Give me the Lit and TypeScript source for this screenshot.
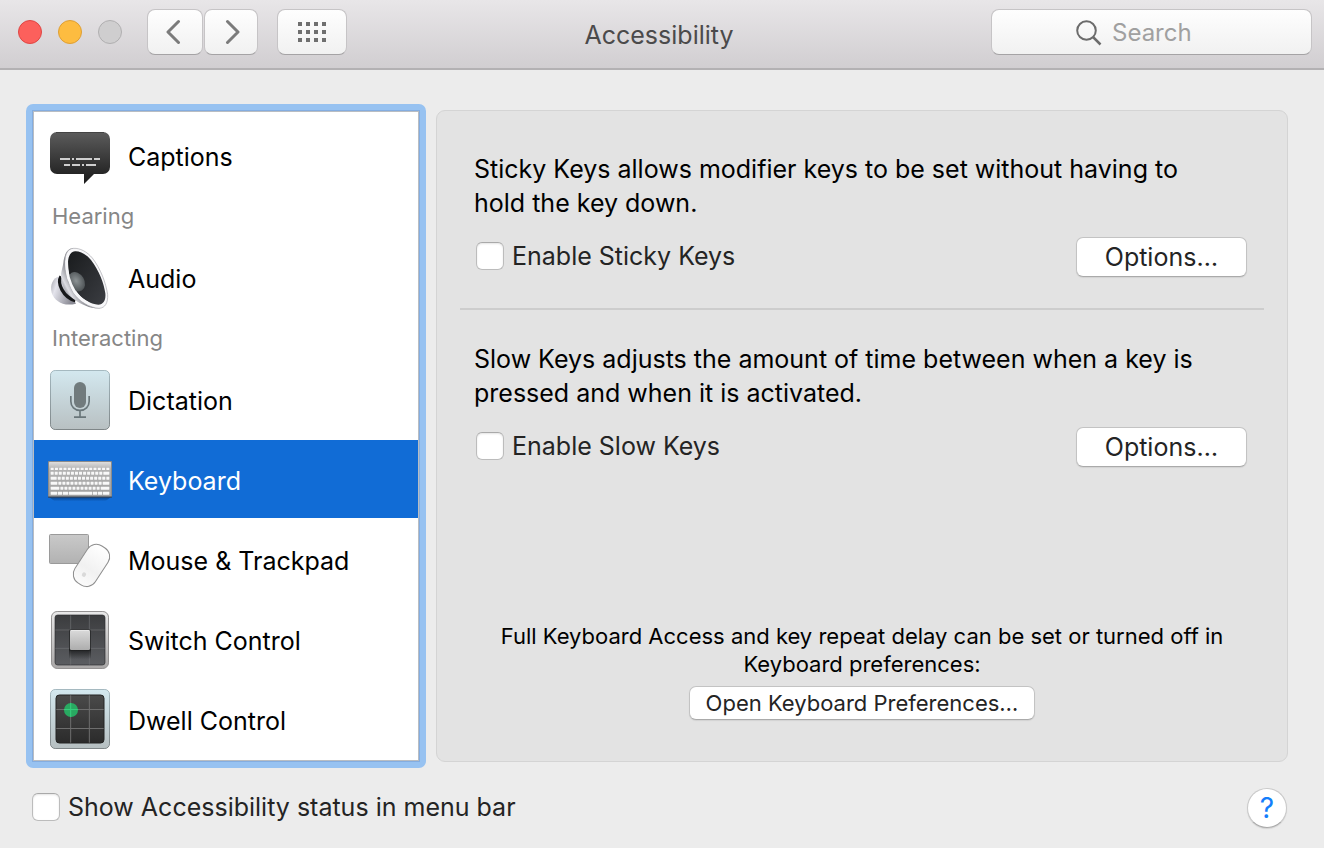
import { LitElement, html, svg, css } from "lit";
import type { TemplateResult } from "lit";
import { customElement, state } from "lit/decorators.js";
import { classMap } from "lit/directives/class-map.js";

const captionsIcon = html`
  <svg viewBox="0 0 64 64" aria-hidden="true">
    <defs>
      <linearGradient id="cap" x1="0" y1="9" x2="0" y2="61" gradientUnits="userSpaceOnUse">
        <stop offset="0" stop-color="#5c5c5c" />
        <stop offset="0.8" stop-color="#262626" />
        <stop offset="1" stop-color="#1c1c1c" />
      </linearGradient>
    </defs>
    <path fill="url(#cap)" d="M9 9H55a7 7 0 0 1 7 7V44a7 7 0 0 1-7 7H46L36 61V51H9a7 7 0 0 1-7-7V16a7 7 0 0 1 7-7Z" />
    <path d="M8 9.500H56" stroke="#444" />
    <path stroke="#cfcfcf" stroke-width="2" d="M12 36h10M24 36h2M28 36h16M46 36h6M16 42h6M24 42h8M34 42h2M38 42h10" />
  </svg>
`;

const audioIcon = html`
  <svg viewBox="84 447 192 192" aria-hidden="true">
    <defs>
      <linearGradient id="magnet" x1="0" y1="0" x2="1" y2="0.4">
        <stop offset="0" stop-color="#a2a2aa" />
        <stop offset="0.3" stop-color="#e4e4ec" />
        <stop offset="1" stop-color="#8a8a94" />
      </linearGradient>
      <linearGradient id="cone" x1="122" y1="570" x2="160" y2="550" gradientUnits="userSpaceOnUse">
        <stop offset="0" stop-color="#8a8b91" />
        <stop offset="0.35" stop-color="#dcdce2" />
        <stop offset="1" stop-color="#88898f" />
      </linearGradient>
      <linearGradient id="membrane" x1="0" y1="0" x2="1" y2="1">
        <stop offset="0" stop-color="#191b1d" />
        <stop offset="1" stop-color="#3b3d42" />
      </linearGradient>
      <radialGradient id="dust" cx="0.45" cy="0.5" r="0.6">
        <stop offset="0" stop-color="#8d9395" />
        <stop offset="1" stop-color="#484d50" />
      </radialGradient>
    </defs>
    <path fill="url(#magnet)" d="M120 541C98 545 89 568 95 590C102 613 128 633 168 623Z" />
    <path fill="none" stroke="#17181a" stroke-width="10" d="M123 541C110 562 130 604 166 614" />
    <path fill="url(#cone)" d="M160 457C140 457 133 478 130 500C127 520 122 530 123 543C126 570 142 598 165 612C185 626 210 638 240 637Z" />
    <path
      fill="#f7f7f9"
      stroke="#a7a7ad"
      stroke-width="2"
      d="M161 457C143 458 136 474 135 494C134 530 143 562 160 590C178 617 211 636 237 637C256 636 264 620 263 596C258 562 242 518 217 486C201 467 180 456 161 457Z"
    />
    <path
      fill="url(#membrane)"
      d="M165 466C150 468 145 482 144 498C143 528 151 558 168 584C183 607 212 625 235 626C251 625 258 612 256 592C252 562 237 523 213 492C199 475 180 465 165 466Z"
    />
    <ellipse cx="170" cy="557" rx="31" ry="23" transform="rotate(60 170 557)" fill="url(#dust)" />
    <path fill="none" stroke="#f7f7f9" stroke-width="8" d="M140 494C139 529 147 560 164 587C174 602 190 615 207 623" />
  </svg>
`;

const dictationIcon = html`
  <svg viewBox="84 81 192 192" aria-hidden="true">
    <defs>
      <linearGradient id="tile" x1="0" y1="0" x2="0" y2="1">
        <stop offset="0" stop-color="#d3e8ef" />
        <stop offset="1" stop-color="#b8c0c2" />
      </linearGradient>
      <linearGradient id="tileEdge" x1="0" y1="0" x2="0" y2="1">
        <stop offset="0" stop-color="#a5b9c0" />
        <stop offset="1" stop-color="#7f8688" />
      </linearGradient>
    </defs>
    <rect x="91.500" y="91.500" width="177" height="177" rx="14" fill="url(#tile)" stroke="url(#tileEdge)" stroke-width="3" />
    <rect x="162" y="126" width="36" height="78" rx="18" fill="#717b7d" />
    <path fill="none" stroke="#69767a" stroke-width="5" d="M152.500 168V184C152.500 200 164 211 180 211C196 211 207.500 200 207.500 184V168M180 211V231M162 231.500H198" />
  </svg>
`;

const keyRows: number[][] = [
  [383, 7, 9, 9, 9, 9, 9, 9, 9, 9, 9, 9, 9, 9, 9, 9],
  [395, 9, 9, 9, 9, 9, 9, 9, 9, 9, 9, 9, 9, 9, 9, 18],
  [410, 9, 18, 9, 9, 9, 9, 9, 9, 9, 9, 9, 9, 9, 9, 9],
  [425, 9, 20, 9, 9, 9, 9, 9, 9, 9, 9, 9, 9, 9, 20],
  [440, 9, 26, 9, 9, 9, 9, 9, 9, 9, 9, 9, 9, 26],
  [455, 9, 19, 13, 16, 70, 13, 13, 19],
];

const keys = keyRows.map(([y, height, ...widths]) => {
  const free = 176 - widths.reduce((sum, width) => sum + width, 0);
  const gap = free / (widths.length - 1);
  let x = 92;
  return widths.map((width) => {
    const key = svg`<rect x=${x} y=${y} width=${width} height=${height} rx="1" fill="#f8f8f8" />`;
    x += width + gap;
    return key;
  });
});

const keyboardIcon = html`
  <svg viewBox="84 321 192 192" aria-hidden="true">
    <defs>
      <linearGradient id="alu" x1="0" y1="0" x2="0" y2="1">
        <stop offset="0" stop-color="#dedede" />
        <stop offset="0.2" stop-color="#b4b4b4" />
        <stop offset="1" stop-color="#9f9f9f" />
      </linearGradient>
      <linearGradient id="kshade" x1="0" y1="0" x2="0" y2="1">
        <stop offset="0" stop-color="#06336e" stop-opacity="0.8" />
        <stop offset="1" stop-color="#06336e" stop-opacity="0" />
      </linearGradient>
    </defs>
    <path d="M86 470H274L256 484H104Z" fill="url(#kshade)" />
    <rect x="84" y="363" width="192" height="108" rx="3" fill="#8b8b8b" />
    <rect x="87" y="366" width="186" height="102" rx="2" fill="url(#alu)" />
    ${keys}
    <path d="M84 471.500H276" stroke="#33445c" stroke-width="3" />
  </svg>
`;

const mouseIcon = html`
  <svg viewBox="84 21 192 192" aria-hidden="true">
    <defs>
      <linearGradient id="pad" x1="0" y1="0" x2="0" y2="1">
        <stop offset="0" stop-color="#c9c9c9" />
        <stop offset="1" stop-color="#b2b2b2" />
      </linearGradient>
      <linearGradient id="mouse" x1="0" y1="0" x2="0" y2="1">
        <stop offset="0" stop-color="#ffffff" />
        <stop offset="0.6" stop-color="#f1f1f1" />
        <stop offset="1" stop-color="#fbfbfb" />
      </linearGradient>
    </defs>
    <rect x="88.500" y="43.500" width="117" height="87" rx="3" fill="url(#pad)" stroke="#9a9a9a" stroke-width="3" />
    <rect x="178" y="72" width="73" height="132" rx="31" transform="rotate(33 214 138)" fill="#000" opacity="0.12" />
    <rect x="178" y="70" width="73" height="132" rx="31" transform="rotate(33 214 136)" fill="url(#mouse)" stroke="#8f8f8f" stroke-width="3" />
    <ellipse cx="192" cy="164" rx="6" ry="7" transform="rotate(33 192 164)" fill="#d9d9d9" />
  </svg>
`;

const switchIcon = html`
  <svg viewBox="84 261 192 192" aria-hidden="true">
    <defs>
      <linearGradient id="frame" x1="0" y1="0" x2="0" y2="1">
        <stop offset="0" stop-color="#e9e9e9" />
        <stop offset="1" stop-color="#a9a7a7" />
      </linearGradient>
      <linearGradient id="well" x1="0" y1="0" x2="0" y2="1">
        <stop offset="0" stop-color="#3b3c3e" />
        <stop offset="1" stop-color="#5b5d61" />
      </linearGradient>
      <linearGradient id="knob" x1="0" y1="0" x2="0" y2="1">
        <stop offset="0" stop-color="#dadada" />
        <stop offset="1" stop-color="#adadad" />
      </linearGradient>
      <linearGradient id="knobShade" x1="0" y1="0" x2="0" y2="1">
        <stop offset="0" stop-color="#101112" stop-opacity="0.85" />
        <stop offset="1" stop-color="#101112" stop-opacity="0" />
      </linearGradient>
    </defs>
    <rect x="94.500" y="274.500" width="171" height="171" rx="17" fill="url(#frame)" stroke="#949292" stroke-width="3" />
    <rect x="105" y="285" width="150" height="150" rx="8" fill="url(#well)" stroke="#2b2c2d" stroke-width="2" />
    <path d="M152 286V434M208 286V434M106 330H254M106 385H254" stroke="#6f7174" stroke-width="2" />
    <rect x="147" y="384" width="66" height="34" rx="6" fill="url(#knobShade)" />
    <rect x="147" y="328" width="66" height="64" rx="5" fill="#1b1c1d" opacity="0.6" />
    <rect x="150" y="330" width="60" height="60" rx="4" fill="url(#knob)" />
    <path d="M153 331.500H207" stroke="#f0f0f0" stroke-width="2" />
  </svg>
`;

const dwellIcon = html`
  <svg viewBox="84 501 192 192" aria-hidden="true">
    <defs>
      <linearGradient id="dframe" x1="0" y1="0" x2="0" y2="1">
        <stop offset="0" stop-color="#d3e8ef" />
        <stop offset="1" stop-color="#b6bfc1" />
      </linearGradient>
      <linearGradient id="dedge" x1="0" y1="0" x2="0" y2="1">
        <stop offset="0" stop-color="#a5b9c0" />
        <stop offset="1" stop-color="#7f8688" />
      </linearGradient>
      <linearGradient id="dwell" x1="0" y1="0" x2="0" y2="1">
        <stop offset="0" stop-color="#4a4a4a" />
        <stop offset="1" stop-color="#2b2b2b" />
      </linearGradient>
    </defs>
    <rect x="91.500" y="508.500" width="177" height="177" rx="14" fill="url(#dframe)" stroke="url(#dedge)" stroke-width="3" />
    <rect x="108" y="525" width="144" height="144" rx="10" fill="url(#dwell)" stroke="#242424" stroke-width="3" />
    <path d="M152 526V668M208 526V668M109 568.500H251M109 625.500H251" stroke="#6e6e6e" stroke-width="3" />
    <circle cx="153" cy="570" r="21" fill="#25b866" opacity="0.88" />
    <path d="M152 549V591M132 568.500H174" stroke="#35cf7c" stroke-width="3" />
  </svg>
`;

interface Pane {
  label: string;
  icon: TemplateResult;
}

interface Group {
  heading?: string;
  panes: Pane[];
}

const groups: Group[] = [
  { panes: [{ label: "Captions", icon: captionsIcon }] },
  { heading: "Hearing", panes: [{ label: "Audio", icon: audioIcon }] },
  {
    heading: "Interacting",
    panes: [
      { label: "Dictation", icon: dictationIcon },
      { label: "Keyboard", icon: keyboardIcon },
      { label: "Mouse & Trackpad", icon: mouseIcon },
      { label: "Switch Control", icon: switchIcon },
      { label: "Dwell Control", icon: dwellIcon },
    ],
  },
];

@customElement("app-root")
export class AppRoot extends LitElement {
  @state() private selected = "Keyboard";

  static styles = css`
    :host {
      display: flex;
      flex-direction: column;
      min-height: 100vh;
      box-sizing: border-box;
      background: #ececec;
      color: #000;
      font: 25px/34px Inter, "Liberation Sans", sans-serif;
    }
    * {
      box-sizing: border-box;
    }
    button,
    input {
      margin: 0;
      padding: 0;
      border: 0;
      font: inherit;
      color: inherit;
    }
    svg {
      display: block;
    }
    .titlebar {
      display: grid;
      grid-template-columns: 1fr auto 1fr;
      align-items: center;
      height: 70px;
      padding: 0 12px 4px 6px;
      background: linear-gradient(#e8e6e8, #d1ced1);
      border-bottom: 2px solid #b3b1b3;
    }
    .tools {
      display: flex;
      align-items: center;
      padding-left: 12px;
    }
    .lights {
      display: flex;
      gap: 16px;
      margin-right: 25px;
    }
    .light {
      width: 24px;
      height: 24px;
      border-radius: 50%;
      border: 1px solid;
    }
    .close {
      background: #fc605c;
      border-color: #df4644;
    }
    .minimize {
      background: #fdbc40;
      border-color: #de9f34;
    }
    .zoom {
      background: #cfcecf;
      border-color: #b0afb0;
    }
    .tool {
      display: grid;
      place-items: center;
      width: 56px;
      height: 46px;
      background: linear-gradient(#fefefe, #f1f1f1);
      border: 1px solid #c6c4c6;
      border-bottom-color: #a5a3a5;
      border-radius: 8px;
      margin-right: 1px;
    }
    .forward {
      width: 54px;
    }
    .grid {
      width: 70px;
      margin-left: 18px;
    }
    .title {
      margin: 0;
      padding-top: 6px;
      font: inherit;
      color: #4b4a4b;
    }
    .search {
      justify-self: end;
      display: flex;
      align-items: center;
      gap: 10px;
      width: 321px;
      height: 46px;
      padding: 0 12px 0 84px;
      background: linear-gradient(#fefefe, #f1f1f1);
      border: 1px solid #c6c4c6;
      border-bottom-color: #a5a3a5;
      border-radius: 8px;
    }
    .search svg {
      margin-top: 2px;
    }
    .search input {
      flex: 1;
      min-width: 0;
      padding-top: 2px;
      background: none;
      outline: none;
      font-size: 24px;
    }
    .search input::placeholder {
      color: #a0a0a0;
      opacity: 1;
    }
    .body {
      flex: 1;
      display: flex;
      gap: 10px;
      padding: 34px 36px 0 26px;
    }
    .sidebar {
      flex: none;
      width: 400px;
      padding: 7px;
      border-radius: 7px;
      background: #97c2f1;
    }
    .list {
      height: 100%;
      padding-top: 4px;
      background: #fff;
      border: 1px solid #b9bdc2;
      outline: 1px solid #84ade0;
    }
    .group {
      margin: 0;
      padding: 0;
      list-style: none;
    }
    .heading {
      margin: 0;
      padding: 3px 18px 0;
      height: 42px;
      font: inherit;
      font-size: 22px;
      line-height: 34px;
      color: #868686;
    }
    .pane {
      display: flex;
      align-items: center;
      gap: 16px;
      width: 100%;
      height: 78px;
      padding: 0 14px;
      background: none;
      text-align: left;
    }
    li {
      min-height: 80px;
    }
    .group:last-child li:last-child {
      min-height: 78px;
    }
    .pane svg {
      flex: none;
      width: 64px;
      height: 64px;
    }
    .pane span {
      padding-top: 4px;
    }
    .selected {
      background: #116cd6;
      color: #fff;
    }
    .panel {
      flex: 1;
      display: flex;
      flex-direction: column;
      margin: 6px 0;
      padding: 41px 23px;
      background: #e3e3e3;
      border: 1px solid #d4d4d4;
      border-radius: 9px;
    }
    .setting {
      padding: 0 17px 31px 14px;
    }
    .setting p {
      margin: 0 30px 17px 0;
    }
    .row {
      display: flex;
      align-items: center;
      justify-content: space-between;
    }
    .rule {
      width: 100%;
      height: 2px;
      margin: 0 0 32px;
      border: 0;
      background: #cdcdcd;
    }
    .check {
      display: flex;
      align-items: center;
      gap: 8px;
      padding-bottom: 2px;
      color: #242424;
    }
    .setting .check {
      padding-left: 2px;
    }
    .check input {
      appearance: none;
      width: 28px;
      height: 28px;
      background: #fff;
      border: 1px solid #bcbcbc;
      border-top-color: #a9a9a9;
      border-radius: 6px;
      box-shadow: inset 0 1px 2px #e4e4e4;
    }
    .check input:checked {
      background: #116cd6;
    }
    .push {
      height: 40px;
      padding: 0 28px;
      background: #fff;
      color: #242424;
      border: 1px solid #c3c3c3;
      border-bottom-color: #aaa;
      border-radius: 7px;
      box-shadow: 0 1px 1px #d2d2d2;
    }
    .note {
      margin-top: auto;
      font-size: 22px;
      line-height: 28px;
      text-align: center;
    }
    .note p {
      margin: 0 0 8px;
    }
    .note .push {
      height: 34px;
      padding: 0 16px;
    }
    .footer {
      display: flex;
      align-items: center;
      justify-content: space-between;
      padding: 20px 37px 20px 32px;
    }
    .help {
      width: 40px;
      height: 40px;
      border-radius: 50%;
      background: #fff;
      color: #147efb;
      border: 1px solid #c9c9c9;
      border-bottom-color: #aaa;
      box-shadow: 0 1px 1px #d2d2d2;
      font-size: 28px;
    }
  `;

  private renderPane(pane: Pane) {
    const active = pane.label === this.selected;
    return html`
      <li>
        <button
          class=${classMap({ pane: true, selected: active })}
          aria-current=${active ? "true" : "false"}
          @click=${() => (this.selected = pane.label)}
        >
          ${pane.icon}<span>${pane.label}</span>
        </button>
      </li>
    `;
  }

  private renderSetting(id: string, description: string, label: string) {
    return html`
      <section class="setting">
        <p>${description}</p>
        <div class="row">
          <label class="check" for=${id}><input id=${id} type="checkbox" />${label}</label>
          <button class="push">Options…</button>
        </div>
      </section>
    `;
  }

  render() {
    return html`
      <header class="titlebar">
        <div class="tools">
          <div class="lights">
            <button class="light close" aria-label="Close"></button>
            <button class="light minimize" aria-label="Minimize"></button>
            <button class="light zoom" aria-label="Zoom" disabled></button>
          </div>
          <button class="tool" aria-label="Back">
            <svg width="18" height="26" viewBox="0 0 18 26">
              <path d="M12.500 2.500L2 13L12.500 23.500" fill="none" stroke="#7b7b7b" stroke-width="3" stroke-linecap="round" stroke-linejoin="round" />
            </svg>
          </button>
          <button class="tool forward" aria-label="Forward">
            <svg width="18" height="26" viewBox="0 0 18 26">
              <path d="M5.500 2.500L16 13L5.500 23.500" fill="none" stroke="#7b7b7b" stroke-width="3" stroke-linecap="round" stroke-linejoin="round" />
            </svg>
          </button>
          <button class="tool grid" aria-label="Show All">
            <svg width="28" height="20" viewBox="0 0 28 20">
              <path d="M0 2H28M0 10H28M0 18H28" stroke="#6f6f6f" stroke-width="4" stroke-dasharray="4 4" />
            </svg>
          </button>
        </div>
        <h1 class="title">Accessibility</h1>
        <label class="search">
          <svg width="26" height="26" viewBox="0 0 26 26" aria-hidden="true">
            <circle cx="10.500" cy="10.500" r="9.300" fill="none" stroke="#6c6c6c" stroke-width="2" />
            <path d="M17 17L24.500 24.500" stroke="#6c6c6c" stroke-width="2.500" />
          </svg>
          <input type="text" placeholder="Search" aria-label="Search" />
        </label>
      </header>
      <main class="body">
        <nav class="sidebar">
          <div class="list">
            ${groups.map(
              (group) => html`
                ${group.heading ? html`<h2 class="heading">${group.heading}</h2>` : null}
                <ul class="group">
                  ${group.panes.map((pane) => this.renderPane(pane))}
                </ul>
              `,
            )}
          </div>
        </nav>
        <div class="panel">
          ${this.renderSetting(
            "sticky",
            "Sticky Keys allows modifier keys to be set without having to hold the key down.",
            "Enable Sticky Keys",
          )}
          <hr class="rule" />
          ${this.renderSetting(
            "slow",
            "Slow Keys adjusts the amount of time between when a key is pressed and when it is activated.",
            "Enable Slow Keys",
          )}
          <div class="note">
            <p>Full Keyboard Access and key repeat delay can be set or turned off in Keyboard preferences:</p>
            <button class="push">Open Keyboard Preferences…</button>
          </div>
        </div>
      </main>
      <footer class="footer">
        <label class="check" for="status"><input id="status" type="checkbox" />Show Accessibility status in menu bar</label>
        <button class="help" aria-label="Help">?</button>
      </footer>
    `;
  }
}
